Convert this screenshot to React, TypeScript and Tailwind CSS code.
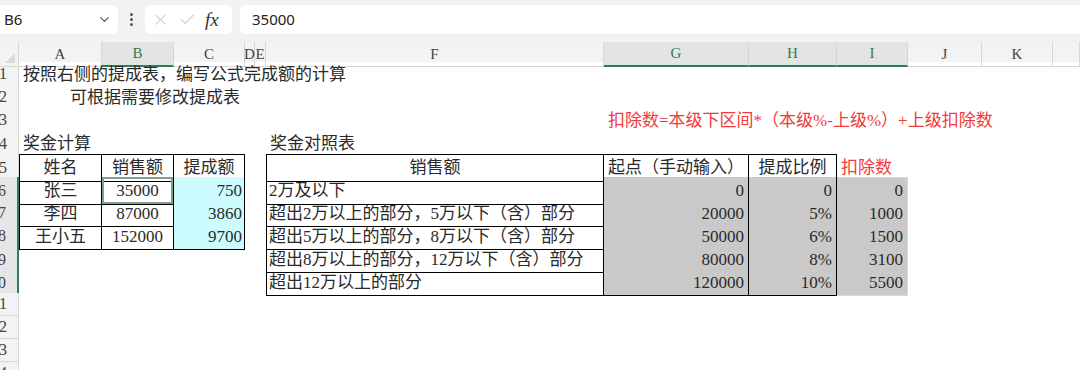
import React from "react";
import { ChevronDown, X, Check } from "lucide-react";

// column letters + which ones are highlighted by the selection
const columns = [
  { k: "A", on: false },
  { k: "B", on: true },
  { k: "C", on: false },
  { k: "D", on: false },
  { k: "E", on: false },
  { k: "F", on: false },
  { k: "G", on: true },
  { k: "H", on: true },
  { k: "I", on: true },
  { k: "J", on: false },
  { k: "K", on: false },
  { k: "", on: false },
];

const gridCols =
  "grid grid-cols-[19px_83px_72px_71px_10px_11px_338px_145px_88px_71px_74px_71px_1fr]";

type Cell = [string, string] | null;

const b = "border-black";
const gray = "bg-[#c9c9c9]";
const cyan = "bg-[#cdfcff]";
const iCell = "bg-[#c9c9c9] border-r border-b border-[#d9d9d9] justify-end pr-[4px]";

const bonus: [string, string, string][] = [
  ["张三", "35000", "750"],
  ["李四", "87000", "3860"],
  ["王小五", "152000", "9700"],
];

const levels: [string, string, string, string][] = [
  ["2万及以下", "0", "0", "0"],
  ["超出2万以上的部分，5万以下（含）部分", "20000", "5%", "1000"],
  ["超出5万以上的部分，8万以下（含）部分", "50000", "6%", "1500"],
  ["超出8万以上的部分，12万以下（含）部分", "80000", "8%", "3100"],
  ["超出12万以上的部分", "120000", "10%", "5500"],
];

function buildRows(): Cell[][] {
  const rows: Cell[][] = [];
  for (let r = 0; r < 14; r++) rows.push(new Array(12).fill(null));

  rows[0][0] = ["按照右侧的提成表，编写公式完成额的计算", "pl-[4px]"];
  rows[1][0] = ["可根据需要修改提成表", "pl-[51px]"];
  rows[2][6] = ["扣除数=本级下区间*（本级%-上级%）+上级扣除数", "pl-[4px] text-[#f23a3a]"];
  rows[3][0] = ["奖金计算", "pl-[4px]"];
  rows[3][5] = ["奖金对照表", "pl-[4px]"];

  // header row (row 5)
  rows[4][0] = ["姓名", `justify-center border ${b}`];
  rows[4][1] = ["销售额", `justify-center border-t border-r border-b ${b}`];
  rows[4][2] = ["提成额", `justify-center border-t border-r border-b ${b}`];
  rows[4][5] = ["销售额", `justify-center border ${b}`];
  rows[4][6] = ["起点（手动输入）", `justify-center border-t border-r border-b ${b}`];
  rows[4][7] = ["提成比例", `justify-center border-t border-r border-b ${b}`];
  rows[4][8] = ["扣除数", "pl-[4px] text-[#f23a3a]"];

  bonus.forEach((row, i) => {
    const r = 5 + i;
    rows[r][0] = [row[0], `justify-center border-l border-r border-b ${b}`];
    rows[r][1] = [
      row[1],
      `justify-center border-r border-b ${b}` +
        (i === 0 ? " shadow-[inset_0_0_0_2px_#7ea08c]" : ""),
    ];
    rows[r][2] = [row[2], `justify-end pr-[2px] border-r border-b ${b} ${cyan}`];
  });

  levels.forEach((row, i) => {
    const r = 5 + i;
    rows[r][5] = [row[0], `pl-[2px] border-l border-r border-b ${b}`];
    rows[r][6] = [row[1], `justify-end pr-[4px] border-r border-b ${b} ${gray}`];
    rows[r][7] = [row[2], `justify-end pr-[4px] border-r border-b ${b} ${gray}`];
    rows[r][8] = [row[3], iCell + (i === 0 ? " border-t" : "")];
  });

  return rows;
}

function FormulaBar() {
  return (
    <div className="h-[42px] bg-[#f1f2f4] flex items-start pt-[5px] gap-0">
      <div className="w-[118px] h-[29px] bg-white rounded-r-md flex items-center pl-[4px] pr-[6px]">
        <span className="flex-1 text-[15px] text-[#222] font-['Noto_Sans',sans-serif]">B6</span>
        <ChevronDown className="w-[15px] h-[15px] text-[#555]" strokeWidth={2} />
      </div>
      <div className="w-[27px] h-[29px] flex items-center justify-center">
        <div className="flex flex-col gap-[2px]">
          <span className="w-[3px] h-[3px] rounded-full bg-[#555]" />
          <span className="w-[3px] h-[3px] rounded-full bg-[#555]" />
          <span className="w-[3px] h-[3px] rounded-full bg-[#555]" />
        </div>
      </div>
      <div className="w-[87px] h-[29px] bg-white rounded-md flex items-center pl-[6px] gap-[8px]">
        <X className="w-[19px] h-[19px] text-[#c4c4c4]" strokeWidth={1.3} />
        <Check className="w-[19px] h-[19px] text-[#c4c4c4]" strokeWidth={1.3} />
        <span className="italic text-[19px] text-[#333] font-['Liberation_Serif',serif] leading-none">
          fx
        </span>
      </div>
      <div className="ml-[8px] flex-1 h-[29px] bg-white rounded-l-md flex items-center pl-[12px]">
        <span className="text-[15px] text-[#222] font-['Noto_Sans',sans-serif]">35000</span>
      </div>
    </div>
  );
}

export default function App() {
  const rows = buildRows();

  return (
    <div className="w-[1080px] h-[370px] overflow-hidden bg-white font-['Liberation_Serif','Noto_Sans_CJK_SC',serif]">
      <FormulaBar />

      {/* column header */}
      <div className={`${gridCols} h-[20px] bg-[#f3f3f3]`}>
        <div className="relative border-r border-b border-[#d6d6d6]">
          <div className="absolute right-[3px] bottom-[3px] w-0 h-0 border-l-[10px] border-l-transparent border-b-[10px] border-b-[#dadada]" />
        </div>
        {columns.map((c, i) => (
          <div
            key={i}
            className={
              c.on
                ? "flex items-center justify-center bg-[#e4e4e4] border-r border-[#d6d6d6] border-b-2 border-b-[#2e7d55] text-[#2e7d55] text-[15px] overflow-visible whitespace-nowrap"
                : "flex items-center justify-center border-r border-b border-[#d6d6d6] text-[#444] text-[15px] overflow-visible whitespace-nowrap"
            }
          >
            {c.k}
          </div>
        ))}
      </div>

      {/* sheet body */}
      {rows.map((row, r) => {
        const sel = r >= 5 && r <= 9;
        return (
          <div key={r} className={`${gridCols} h-[23.1px]`}>
            <div
              className={
                sel
                  ? "flex items-center justify-end pr-[11px] overflow-hidden bg-[#e6e6e6] border-b border-[#d6d6d6] border-r-2 border-r-[#2e7d55] text-[16px] text-[#444]"
                  : "flex items-center justify-end pr-[11px] overflow-hidden bg-[#f3f3f3] border-b border-r border-[#d6d6d6] text-[16px] text-[#444]"
              }
            >
              {r + 1}
            </div>
            {row.map((cell, c) => (
              <div
                key={c}
                className={`flex items-center whitespace-nowrap overflow-visible text-[17px] text-[#2a2a2a] ${
                  cell ? cell[1] : ""
                }`}
              >
                {cell ? cell[0] : ""}
              </div>
            ))}
          </div>
        );
      })}
    </div>
  );
}
